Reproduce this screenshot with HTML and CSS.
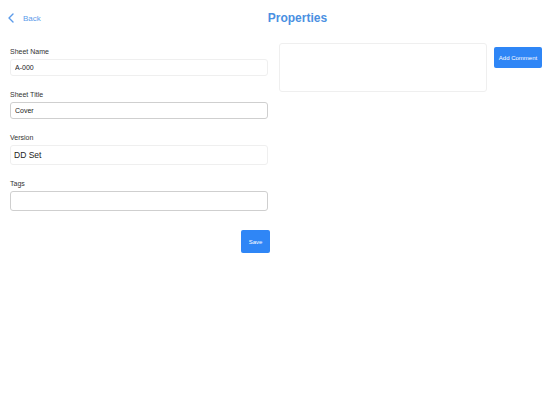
FILE: index.html
```html
<!DOCTYPE html>
<html lang="en">
<head>
  <meta charset="UTF-8">
  <meta name="viewport" content="width=device-width, initial-scale=1.0">
  <title>Properties</title>
  <link rel="stylesheet" href="styles.css">
</head>
<body>
  <header class="topbar">
    <a class="back" href="#">
      <svg class="chevron" width="6" height="10" viewBox="0 0 6 10">
        <path d="M5 1 L1 5 L5 9" fill="none" stroke="currentColor" stroke-width="1.4" stroke-linecap="round" stroke-linejoin="round"/>
      </svg>
      <span>Back</span>
    </a>
    <h1>Properties</h1>
  </header>

  <main class="content">
    <form class="sheet-form">
      <div class="form-group">
        <label for="sheet_name">Sheet Name</label>
        <input type="text" id="sheet_name" class="field field-soft" value="A-000">
      </div>

      <div class="form-group">
        <label for="sheet_title">Sheet Title</label>
        <input type="text" id="sheet_title" class="field" value="Cover">
      </div>

      <div class="form-group">
        <label for="version">Version</label>
        <input type="text" id="version" class="field field-soft field-tall" value="DD Set">
      </div>

      <div class="form-group">
        <label for="tags">Tags</label>
        <input type="text" id="tags" class="field field-tall">
      </div>

      <div class="actions">
        <button type="submit" class="btn btn-save">Save</button>
      </div>
    </form>

    <div class="comments">
      <textarea class="comment-box"></textarea>
      <button type="button" class="btn btn-comment">Add Comment</button>
    </div>
  </main>
</body>
</html>
```

FILE: styles.css
```css
:root {
  --primary: #2f86f6;
  --title: #4a90e2;
  --link: #5b9bea;
  --dark: #333333;
  --border-soft: #efefef;
  --border: #cfcfcf;
}

* {
  margin: 0;
  padding: 0;
  box-sizing: border-box;
}

body {
  font-family: 'Liberation Sans', Arial, sans-serif;
  background: #ffffff;
  color: var(--dark);
  width: 552px;
  height: 414px;
}

.topbar {
  display: flex;
  align-items: center;
  height: 36px;
  padding-left: 8px;
}

.back {
  display: flex;
  align-items: center;
  gap: 9px;
  color: var(--link);
  text-decoration: none;
  font-size: 8px;
}

.chevron {
  color: var(--link);
}

.topbar h1 {
  flex: 1;
  text-align: center;
  font-size: 12px;
  font-weight: 700;
  color: var(--title);
  padding-left: 2px;
}

.content {
  display: flex;
  padding-top: 7px;
}

.sheet-form {
  width: 270px;
  padding: 4px 0 0 10px;
}

.form-group {
  margin-bottom: 14px;
}

label {
  display: block;
  font-size: 7px;
  line-height: 10px;
  margin-bottom: 2px;
  color: var(--dark);
}

.field {
  display: block;
  width: 258px;
  height: 17px;
  padding: 0 4px;
  border: 1px solid var(--border);
  border-radius: 3px;
  font-family: inherit;
  font-size: 7px;
  color: #222;
  background: #fff;
}

.field-soft {
  border-color: var(--border-soft);
}

.field-tall {
  height: 20px;
  padding: 0 3px;
  font-size: 8.5px;
}

.actions {
  display: flex;
  justify-content: flex-end;
  margin-top: 19px;
}

.btn {
  background: var(--primary);
  color: #ffffff;
  border: none;
  border-radius: 2px;
  font-family: inherit;
  font-size: 6px;
  cursor: pointer;
}

.btn-save {
  width: 29px;
  height: 23px;
}

.comments {
  display: flex;
  align-items: flex-start;
  gap: 7px;
  margin-left: 9px;
}

.comment-box {
  width: 208px;
  height: 49px;
  border: 1px solid var(--border-soft);
  border-radius: 3px;
  resize: none;
  font-family: inherit;
}

.btn-comment {
  margin-top: 4px;
  width: 48px;
  height: 21px;
}
```
